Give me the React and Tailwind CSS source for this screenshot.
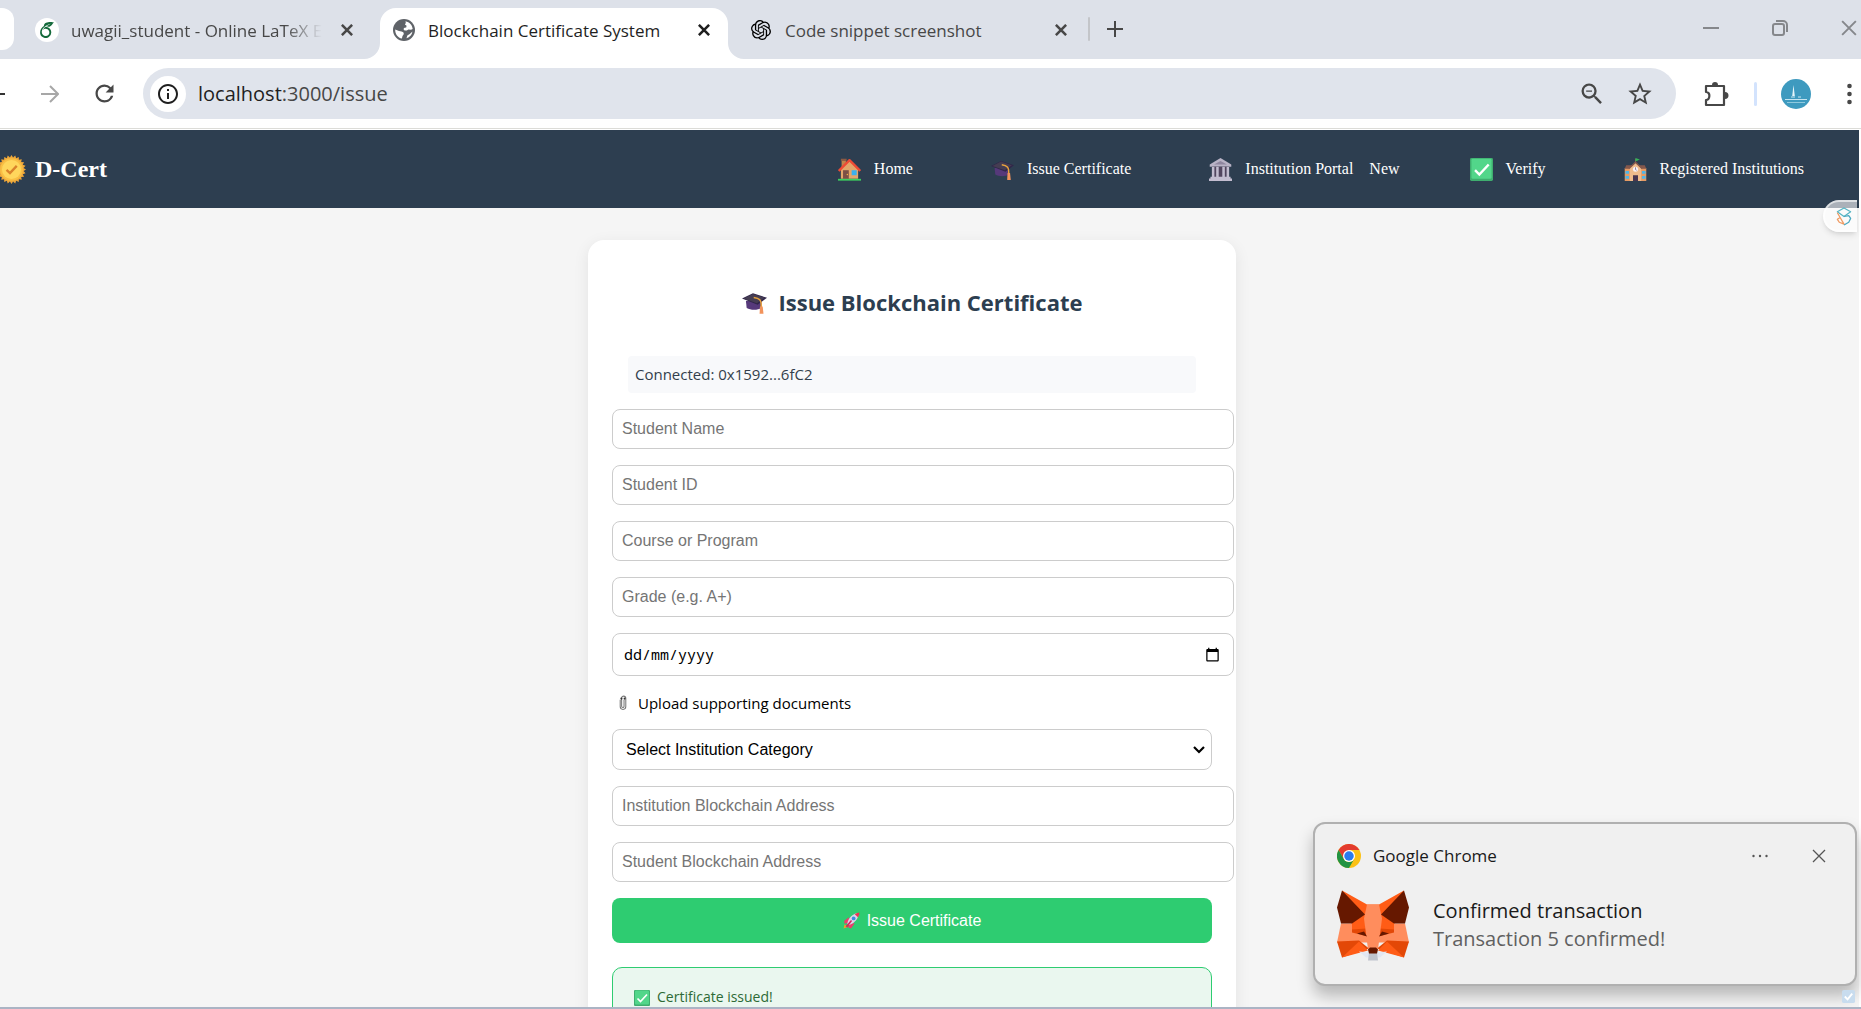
import React from "react";
import { SiOpenai, SiOverleaf } from "react-icons/si";
import { MdRefresh, MdOutlineExtension, MdStarBorder, MdZoomOut, MdOutlineInfo, MdCalendarToday } from "react-icons/md";

const uiFont = "font-['Open_Sans','Noto_Sans',sans-serif]";
const serif = "font-['Liberation_Serif',serif]";
const arial = "font-['Liberation_Sans',sans-serif]";

const CloseIcon = ({ className, w = 2 }) => (
  <svg viewBox="0 0 14 14" className={className} fill="none" stroke="currentColor" strokeWidth={w} aria-hidden="true">
    <path d="M1 1 13 13M13 1 1 13" />
  </svg>
);

const Globe = ({ className }) => (
  <svg viewBox="0 0 22 22" className={className} aria-hidden="true">
    <circle cx="11" cy="11" r="11" fill="#5f6368" />
    <path fill="#fff" d="M2.200 10.500 6 12l2.500.5c2 .3 2.500 1.500 2.200 2.800L9.500 17l-.6 2.600C5 18.800 2 15.200 2.200 10.500zM12.500 2.200c4 .7 6.800 4 7.200 7.800l-1.700.8-2.600-.4-1.600 1.200-2.200-.2c-1.400-.6-1.200-2 0-2.600l1.600-.4.4-1.600-1.700-1.200.9-1.600zM19.500 12.500a8.700 8.700 0 0 1-6 6.700l.8-2.700 2.400-1.500z" />
  </svg>
);

// Alternating outer and inner radii give the seal its toothed edge.
const sealPoints = Array.from({ length: 48 }, (_, i) => {
  const r = i % 2 ? 13.400 : 16;
  const a = (i * Math.PI) / 24;
  return `${(16 + r * Math.cos(a)).toFixed(2)},${(16 + r * Math.sin(a)).toFixed(2)}`;
}).join(" ");

const Seal = ({ className }) => (
  <svg viewBox="0 0 32 32" className={className} aria-hidden="true">
    <polygon points={sealPoints} fill="#efa83a" />
    <circle cx="16" cy="16" r="12.500" fill="#f8bf45" />
    <circle cx="16" cy="16" r="10.500" fill="#ffd65c" />
    <path d="M10.500 16.500l3.800 3.500 7.500-8" fill="none" stroke="#d9822b" strokeWidth="2.600" />
  </svg>
);

const House = ({ className }) => (
  <svg viewBox="0 0 32 32" className={className} aria-hidden="true">
    <path fill="#c3834a" d="M5 2h6v12H5z" />
    <path fill="#8a5a44" d="M4 1h8v3H4z" />
    <path fill="#e3a66a" d="M16 4 28 16v13H4V16z" />
    <path d="M1 18 16 3l15 15" fill="none" stroke="#ee4b35" strokeWidth="3.200" strokeLinejoin="round" />
    <path fill="#7c5045" d="M7 17h8v12H7z" />
    <path fill="#3bb0ee" d="M19 17h7v7h-7z" />
    <circle cx="13" cy="23" r="1" fill="#f2b84b" />
    <path fill="#3ccf5f" d="M0 29h32v2.500H0z" />
  </svg>
);

const Cap = ({ className }) => (
  <svg viewBox="0 0 32 32" className={className} aria-hidden="true">
    <path fill="#56397a" d="M5 14h20v9c-5 3-14 3-19 0z" />
    <path fill="#31264a" d="M0 11 14 4l18 6-12 9z" />
    <path fill="#453d52" d="M2 11 14 5l15 5-10 7z" />
    <path d="M15 9.500c7 1 10.500 3 9.500 13" fill="none" stroke="#e8a33d" strokeWidth="2" />
    <path fill="#f2935c" d="M23 21h3.500l1 9.500h-5z" />
  </svg>
);

const Bank = ({ className }) => (
  <svg viewBox="0 0 32 32" className={className} aria-hidden="true">
    <path fill="#b9b3c6" d="M16 0 31 9v3H1V9z" />
    <path fill="#8f869f" d="M16 4l9 5H7z" />
    <path fill="#52465f" d="M4 12h24v15H4z" />
    <path fill="#c3bdd0" d="M4 12h3.500v15H4zM10 12h3.500v15H10zM18.500 12H22v15h-3.500zM24.500 12H28v15h-3.500zM2 26h28v2.500H2zM0 28.500h32V32H0z" />
  </svg>
);

const CheckBox = ({ className }) => (
  <svg viewBox="0 0 32 32" className={className} aria-hidden="true">
    <rect width="32" height="32" rx="2" fill="#3fae6f" />
    <rect x="2" y="1" width="28" height="28" rx="2" fill="#52d68a" />
    <path d="M7 17l6 6L26 9" fill="none" stroke="#fff" strokeWidth="3.400" />
  </svg>
);

const School = ({ className }) => (
  <svg viewBox="0 0 32 32" className={className} aria-hidden="true">
    <path d="M16 1v8" stroke="#8d6a5b" strokeWidth="1.200" />
    <path fill="#35b558" d="M16 0l6 2-6 3z" />
    <path fill="#e59a63" d="M1 14h30v18H1z" />
    <path fill="#84584c" d="M3 10h26l2 5H1z" />
    <path fill="#f0bc8c" d="M16 7l8 7v18H8V14z" />
    <path d="M7 14.500 16 6l9 8.500" fill="none" stroke="#84584c" strokeWidth="2" />
    <circle cx="16" cy="15.500" r="3.500" fill="#f6f1f7" />
    <path d="M16 13v3l1.500 1" fill="none" stroke="#6c5776" strokeWidth="1" />
    <path fill="#4db6ea" d="M2 18h5v4H2zM25 18h5v4h-5zM2 25h5v4H2zM25 25h5v4h-5z" />
    <path fill="#493650" d="M12.500 24h7v8h-7z" />
  </svg>
);

const Rocket = ({ className }) => (
  <svg viewBox="0 0 32 32" className={className} aria-hidden="true">
    <path fill="#f59b2d" d="M1 31l2-8 6 5z" />
    <path fill="#ed3b6b" d="M11 10 2 17l1 5 8-2zM22 21l-7 10-5-2 2-8z" />
    <path fill="#dcd3ea" d="M8 22C10 11 19 3 29 2c1 10-7 19-18 23z" />
    <path fill="#ea3555" d="M22 4c3-2 6-3 9-3 0 3-1 6-3 9z" />
    <circle cx="20" cy="12" r="3.600" fill="#3a8fe0" />
    <path fill="#d8235b" d="M5 27 15 15l2 2L8 29z" />
  </svg>
);

const Clip = ({ className }) => (
  <svg viewBox="0 0 10 20" className={className} fill="none" stroke="#777" aria-hidden="true">
    <path d="M1.500 6v8.500a3.500 3.500 0 0 0 7 0V4a2.600 2.600 0 0 0-5.200 0v10a1.500 1.500 0 0 0 3 0V6" strokeWidth="1.300" />
    <circle cx="3" cy="4.500" r="1.300" fill="#333" stroke="none" />
    <circle cx="7" cy="4.500" r="1.300" fill="#333" stroke="none" />
  </svg>
);

const Chrome = ({ className }) => (
  <svg viewBox="0 0 48 48" className={className} aria-hidden="true">
    <circle cx="24" cy="24" r="24" fill="#fbc116" />
    <path fill="#e33b2e" d="M3.200 12A24 24 0 0 1 44.800 12H24L13.600 30z" />
    <path fill="#229342" d="M3.200 12 13.600 30a12 12 0 0 0 20.800 0L24 48A24 24 0 0 1 3.200 12z" />
    <circle cx="24" cy="24" r="12" fill="#fff" />
    <circle cx="24" cy="24" r="9.500" fill="#2a7bee" />
  </svg>
);

const Fox = ({ className }) => (
  <svg viewBox="0 0 72 70" className={className} aria-hidden="true">
    <path fill="#ff5c16" d="M5 0 30 14h12L67 0 57 35H15z" />
    <path fill="#ff8d5d" d="M4 33h64l4 19H0z" />
    <path fill="#e34807" d="M0 51l22-1 10 8-27 9zM72 51l-22-1-10 8 27 9z" />
    <path fill="#ff5c16" d="M22 51l9 9-26 7zM50 51l-9 9 26 7z" />
    <path fill="#e34807" d="M15 33l13-9 3 22-16-4zM57 33l-13-9-3 22 16-4z" />
    <path fill="#ff5c16" d="M15 33l13-9 1 14-14 1zM57 33l-13-9-1 14 14 1z" />
    <path fill="#ff8d5d" d="M30 14h12l3 14-4 31H31l-4-31z" />
    <path fill="#661800" d="M5 0 28 24 15 33H4L0 17zM67 0 44 24l13 9h11l4-16zM20 43l7-2 3 5zM52 43l-7-2-3 5z" />
    <path fill="#e2e7f2" d="M22 61l10 1h8l10-1-7 6H29z" />
    <path fill="#c0c4cd" d="M32 62h8l1 8H31z" />
    <path fill="#661800" d="M33 57h6l2 2-1 4h-8l-1-4z" />
  </svg>
);

const Avatar = ({ className }) => (
  <svg viewBox="0 0 30 30" className={className} aria-hidden="true">
    <circle cx="15" cy="15" r="15" fill="#3e9abf" />
    <path fill="#e6f5fa" d="M12.500 6l1.300 11h-2.600z" />
    <path d="M10 18h4M17 18h3M4 20.500h22" stroke="#c7e5f0" strokeWidth="1" />
    <path d="M6 23.500h18" stroke="#8fc9de" strokeWidth="1" />
  </svg>
);

function Tab({ icon, title, active, titleWidth, className }) {
  return (
    <div className={`flex items-center ${active ? "text-[#1f1f1f]" : "text-[#474747]"} ${className}`}>
      <span className="flex w-6 shrink-0 justify-center">{icon}</span>
      <span className={`ml-3 pt-0.5 whitespace-nowrap text-[17px] ${titleWidth}`}>{title}</span>
      <button type="button" aria-label="Close tab" className="ml-auto flex size-4 items-center justify-center">
        <CloseIcon className="size-3" w={3} />
      </button>
    </div>
  );
}

function BrowserChrome() {
  return (
    <header className="shrink-0">
      <div className="flex h-[59px] items-start bg-[#dde1e9]">
        <div className="mt-2 h-[42px] w-[14px] shrink-0 rounded-r-xl bg-white" />
        <Tab
          className="ml-[21px] h-[59px] w-[320px] shrink-0"
          titleWidth="w-[251px] mask-r-from-85%"
          icon={
            <span className="flex size-6 items-center justify-center rounded-full bg-white">
              <SiOverleaf className="size-4 text-[#13693a]" />
            </span>
          }
          title="uwagii_student - Online LaTeX E"
        />
        <svg viewBox="0 0 16 16" className="ml-[9px] size-4 shrink-0 self-end" aria-hidden="true">
          <path fill="#fff" d="M16 0v16H0A16 16 0 0 0 16 0z" />
        </svg>
        <Tab
          active
          className="mt-2 h-[51px] w-[348px] shrink-0 rounded-t-2xl bg-white pb-2 pl-3 pr-4"
          titleWidth="w-[240px]"
          icon={<Globe className="size-[22px]" />}
          title="Blockchain Certificate System"
        />
        <svg viewBox="0 0 16 16" className="size-4 shrink-0 self-end" aria-hidden="true">
          <path fill="#fff" d="M0 0v16h16A16 16 0 0 1 0 0z" />
        </svg>
        <Tab
          className="ml-[5px] h-[59px] w-[320px] shrink-0"
          titleWidth="w-[220px]"
          icon={<SiOpenai className="size-5 text-black" />}
          title="Code snippet screenshot"
        />
        <div className="ml-[19px] mt-[17px] h-6 w-[2px] rounded-full bg-[#c3c5c9]" />
        <button type="button" aria-label="New tab" className="ml-[17px] mt-[21px] text-[#474747]">
          <svg viewBox="0 0 16 16" className="size-4" stroke="currentColor" strokeWidth="2" aria-hidden="true">
            <path d="M8 0v16M0 8h16" />
          </svg>
        </button>
        <div className="ml-auto mr-1 mt-5 flex gap-[53px] text-[#85878b]">
          <button type="button" aria-label="Minimize">
            <svg viewBox="0 0 16 16" className="size-4" stroke="currentColor" strokeWidth="2" aria-hidden="true">
              <path d="M0 8h16" />
            </svg>
          </button>
          <button type="button" aria-label="Restore">
            <svg viewBox="0 0 16 16" className="size-4" fill="none" stroke="currentColor" strokeWidth="2" aria-hidden="true">
              <rect x="1" y="4" width="11" height="11" rx="2" />
              <path d="M4 1h7a4 4 0 0 1 4 4v7" />
            </svg>
          </button>
          <button type="button" aria-label="Close window">
            <CloseIcon className="size-4" w={1.700} />
          </button>
        </div>
      </div>
      <div className="flex h-[69px] items-center bg-white text-[#474747]">
        <button type="button" aria-label="Back" className="h-[2px] w-[5px] bg-[#333]" />
        <button type="button" aria-label="Forward" className="ml-9 text-[#a7a7a7]">
          <svg viewBox="0 0 18 18" className="size-[18px]" fill="none" stroke="currentColor" strokeWidth="2" aria-hidden="true">
            <path d="M0 9h17M9 1l8 8-8 8" />
          </svg>
        </button>
        <button type="button" aria-label="Reload" className="ml-8">
          <MdRefresh className="size-[27px]" />
        </button>
        <div className="ml-[25px] mr-7 flex h-[51px] flex-1 items-center rounded-full bg-[#e0e4ec] pl-[7px] pr-[22px]">
          <button type="button" aria-label="Site information" className="flex size-9 items-center justify-center rounded-full bg-white text-[#1f1f1f]">
            <MdOutlineInfo className="size-6 rotate-0" />
          </button>
          <div className="ml-3 text-xl">
            <span className="text-[#1f1f1f]">localhost</span>:3000/issue
          </div>
          <button type="button" aria-label="Zoom" className="ml-auto">
            <MdZoomOut className="size-7" />
          </button>
          <button type="button" aria-label="Bookmark" className="ml-5">
            <MdStarBorder className="size-7" />
          </button>
        </div>
        <button type="button" aria-label="Extensions">
          <svg viewBox="0 0 26 26" className="size-[26px]" aria-hidden="true">
            <path fill="none" stroke="currentColor" strokeWidth="2.200" strokeLinejoin="round" d="M2 5h18v19H2v-5c4 0 5-8 0-8z" />
            <path fill="currentColor" d="M8 4a3 3 0 0 1 6 0zM21 11a3 3 0 0 1 0 7z" />
          </svg>
        </button>
        <div className="ml-6 h-6 w-[3px] rounded-full bg-[#d3e3fd]" />
        <button type="button" aria-label="Profile" className="ml-6">
          <Avatar className="size-[30px]" />
        </button>
        <button type="button" aria-label="Menu" className="ml-9 mr-[9px]">
          <svg viewBox="0 0 5 22" className="h-[22px] w-[5px]" fill="currentColor" aria-hidden="true">
            <circle cx="2.500" cy="3" r="2.300" />
            <circle cx="2.500" cy="11" r="2.300" />
            <circle cx="2.500" cy="19" r="2.300" />
          </svg>
        </button>
      </div>
    </header>
  );
}

const navItems = [
  { icon: House, label: "Home" },
  { icon: Cap, label: "Issue Certificate" },
  { icon: Bank, label: "Institution Portal", extra: "New" },
  { icon: CheckBox, label: "Verify" },
  { icon: School, label: "Registered Institutions" },
];

function SiteNav() {
  return (
    <nav className={`mr-[2px] flex h-[78px] items-center bg-[#2d3e50] pr-[47px] text-white ${serif}`}>
      <a href="#home" className="flex items-center text-2xl font-bold">
        <span className="mr-[9px] flex w-[26px] justify-end overflow-hidden">
          <Seal className="h-[29px] w-[29px] shrink-0" />
        </span>
        D-Cert
      </a>
      <ul className="ml-auto flex gap-[70px] text-base">
        {navItems.map(({ icon: Icon, label, extra }) => (
          <li key={label}>
            <a href="#nav" className="flex items-center whitespace-nowrap">
              <Icon className="mr-[13px] size-[23px]" />
              <span className="mr-2">{label}</span>
              {extra && <span className="ml-2">{extra}</span>}
            </a>
          </li>
        ))}
      </ul>
    </nav>
  );
}

const fieldBox = "rounded-lg border border-[#ccc] bg-white";

function TextField({ label }) {
  return (
    <input
      type="text"
      aria-label={label}
      placeholder={label}
      className={`-mr-[22px] h-10 px-[9px] text-base placeholder:text-[#757575] ${fieldBox} ${arial}`}
    />
  );
}

function IssueForm() {
  return (
    <form className="flex w-[648px] shrink-0 flex-col gap-4 rounded-2xl bg-white p-6 shadow-[0_4px_16px_rgba(0,0,0,0.08)]">
      <h1 className="mt-5 flex items-center justify-center gap-3 pb-[14px] text-[22px] leading-9 font-bold text-[#2c3e50]">
        <Cap className="size-[25px]" />
        Issue Blockchain Certificate
      </h1>
      <p className="mx-4 mt-[6px] rounded bg-[#f8f9fb] px-[7px] py-2 text-[15px] leading-[21px] text-[#333f4c]">Connected: 0x1592...6fC2</p>
      <TextField label="Student Name" />
      <TextField label="Student ID" />
      <TextField label="Course or Program" />
      <TextField label="Grade (e.g. A+)" />
      <div className={`-mr-[22px] flex h-[43px] items-center px-[11px] ${fieldBox}`}>
        <input
          type="text"
          aria-label="Date"
          placeholder="dd/mm/yyyy"
          className="min-w-0 flex-1 font-['Noto_Sans_Mono','DejaVu_Sans_Mono',monospace] text-[15px] text-black outline-none placeholder:text-black"
        />
        <button type="button" aria-label="Open calendar" className="mr-[2px]">
          <MdCalendarToday className="size-[15px] text-black" />
        </button>
      </div>
      <label className="flex h-[22px] items-center gap-[10px] pl-[6px] text-[15px] text-black">
        <Clip className="h-4 w-[10px]" />
        Upload supporting documents
        <input type="file" className="hidden" />
      </label>
      <div className={`-mt-[1px] grid h-[41px] items-center ${fieldBox} ${arial}`}>
        <select aria-label="Institution category" className="col-start-1 row-start-1 h-full appearance-none pl-[13px] text-base text-black">
          <option>Select Institution Category</option>
        </select>
        <svg viewBox="0 0 12 8" className="col-start-1 row-start-1 mr-[6px] h-2 w-3 justify-self-end" fill="none" stroke="#000" strokeWidth="2.200" aria-hidden="true">
          <path d="M1 1l5 5 5-5" />
        </svg>
      </div>
      <TextField label="Institution Blockchain Address" />
      <TextField label="Student Blockchain Address" />
      <button type="button" className={`flex h-[45px] items-center justify-center gap-[7px] rounded-lg bg-[#2ecc71] text-base text-white ${arial}`}>
        <Rocket className="size-[17px]" />
        Issue Certificate
      </button>
      <div role="status" className="mt-2 flex h-24 items-start gap-[7px] rounded-[10px] border border-[#2ecc71] bg-[#eaf7ef] px-[21px] pt-[18px] text-[14px] leading-[22px] text-[#2d6a35]">
        <CheckBox className="mt-1 size-4" />
        Certificate issued!
      </div>
    </form>
  );
}

function Toast() {
  return (
    <aside className="absolute right-1 bottom-[21px] w-[544px] rounded-xl border-2 border-[#b0b0b0] bg-[#f0f0f0] px-[22px] pt-5 pb-[23px] shadow-[0_10px_16px_rgba(0,0,0,0.25)]">
      <div className="flex items-center text-[#1a1a1a]">
        <Chrome className="size-6" />
        <span className="ml-3 text-[17px] leading-6">Google Chrome</span>
        <button type="button" aria-label="More options" className="ml-auto">
          <svg viewBox="0 0 16 4" className="h-1 w-4" fill="#555" aria-hidden="true">
            <circle cx="1.500" cy="2" r="1.200" />
            <circle cx="8" cy="2" r="1.200" />
            <circle cx="14.500" cy="2" r="1.200" />
          </svg>
        </button>
        <button type="button" aria-label="Dismiss" className="mr-[7px] ml-11 text-[#555]">
          <CloseIcon className="size-[14px]" w={1.300} />
        </button>
      </div>
      <div className="mt-[22px] flex items-start gap-6">
        <Fox className="h-[71px] w-[72px]" />
        <div className="pt-[7px] text-xl leading-7">
          <p className="text-[#1a1a1a]">Confirmed transaction</p>
          <p className="text-[#606060]">Transaction 5 confirmed!</p>
        </div>
      </div>
    </aside>
  );
}

export default function App() {
  return (
    <div className={`relative flex h-screen flex-col overflow-hidden border-b-2 border-[#abb4c4] bg-white ${uiFont}`}>
      <BrowserChrome />
      <div className="flex min-h-0 flex-1 flex-col border-t border-[#dcdcd8] pt-px">
        <SiteNav />
        <main className="mr-[2px] flex min-h-0 flex-1 items-start justify-center overflow-hidden bg-[#f5f5f5] pt-8 pr-[35px]">
          <IssueForm />
        </main>
      </div>
      <button
        type="button"
        aria-label="Open side panel"
        className="absolute top-[200px] right-1 flex h-8 w-[34px] items-center justify-end rounded-l-full border-2 border-r-0 border-white/60 bg-white/60 pr-1 shadow-md"
      >
        <svg viewBox="0 0 18 20" className="h-[19px] w-[18px]" fill="none" strokeWidth="1.300" strokeLinejoin="round" aria-hidden="true">
          <path stroke="#55b5c4" d="M9 1l7 4-7 5-7-5z" />
          <path stroke="#ef9a62" d="M2 6l7 12-5-2-2-3 3-2" />
          <path stroke="#4aa8c0" d="M9 10l5-1 2 3-2 4-5 3" />
        </svg>
      </button>
      <Toast />
      <svg viewBox="0 0 14 14" className="absolute right-[6px] bottom-1 size-[13px]" aria-hidden="true">
        <rect width="14" height="14" rx="2" fill="#c8dcee" />
        <path d="M3 7l3 3 5-6" fill="none" stroke="#fff" strokeWidth="2" />
      </svg>
    </div>
  );
}
